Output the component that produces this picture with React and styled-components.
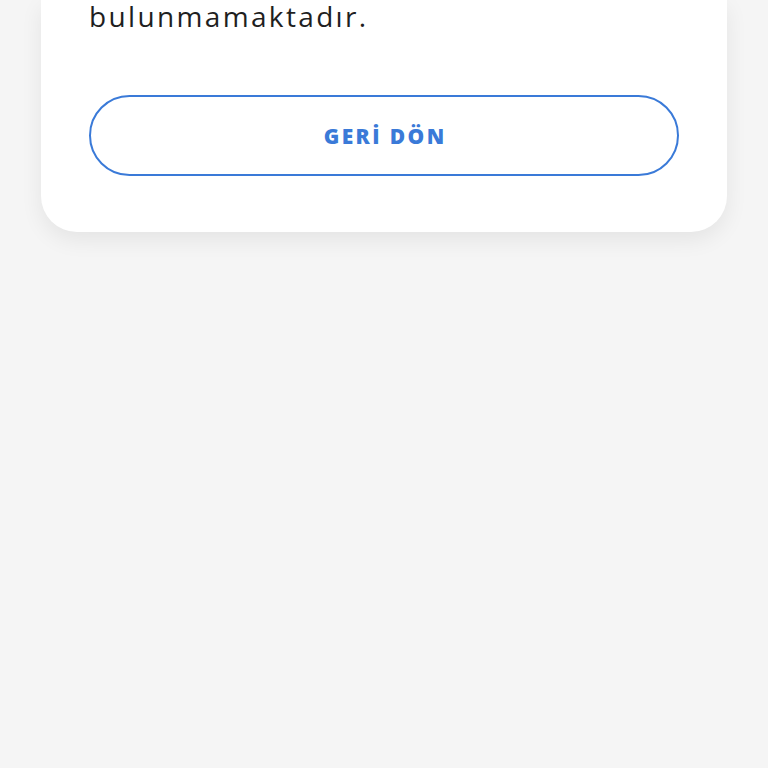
import React from "react";
import styled, { createGlobalStyle } from "styled-components";

const Global = createGlobalStyle`
  html, body {
    margin: 0;
    padding: 0;
    background: #f5f5f5;
  }
  body {
    font-family: "Open Sans", "Lato", sans-serif;
    height: 768px;
    overflow: hidden;
  }
`;

const Page = styled.div`
  padding: 0 41px;
`;

const Card = styled.div`
  background: #ffffff;
  border-radius: 0 0 36px 36px;
  box-shadow: 0 8px 22px rgba(0, 0, 0, 0.07);
  padding: 0 48px 56px;
  display: flex;
  flex-direction: column;
`;

const Message = styled.p`
  margin: 0;
  font-size: 28px;
  line-height: 32px;
  font-weight: 400;
  letter-spacing: 2.35px;
  color: #1f1f1f;
`;

const BackButton = styled.button`
  margin-top: 63px;
  height: 81px;
  width: 100%;
  border: 2px solid #3a7ad8;
  border-radius: 41px;
  background: #ffffff;
  color: #3a7ad8;
  font-family: "Open Sans", "Lato", sans-serif;
  font-size: 21px;
  font-weight: 800;
  letter-spacing: 2.4px;
  padding: 0 0 0 2.4px;
  cursor: pointer;
`;

export default function App() {
  return (
    <>
      <Global />
      <Page>
        <Card>
          <Message>bulunmamaktadır.</Message>
          <BackButton>GERİ DÖN</BackButton>
        </Card>
      </Page>
    </>
  );
}
